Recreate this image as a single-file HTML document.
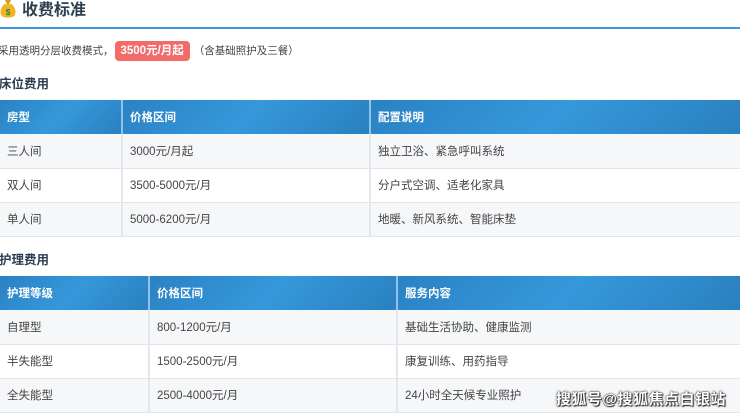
<!DOCTYPE html>
<html><head><meta charset="utf-8"><style>
*{margin:0;padding:0;box-sizing:border-box}
body{width:740px;height:416px;overflow:hidden;background:#fff;font-family:"Liberation Sans","Noto Sans CJK SC",sans-serif;color:#333;position:relative}
.title{position:absolute;left:0;top:0;height:29px;width:740px;border-bottom:2px solid #3a96dd;font-size:16px;font-weight:bold;color:#2c3e50;line-height:18px}
.title svg{position:absolute;left:0;top:0}
.title span{position:absolute;left:22px;top:2px}
.intro{position:absolute;left:-2px;top:41px;font-size:10.5px;color:#444;line-height:19px;white-space:nowrap}
.badge{display:inline-block;background:#f26b6b;color:#fff;font-weight:bold;font-size:11.5px;border-radius:4px;padding:0 6px;line-height:20px;margin:0 4px 0 1px}
.h{position:absolute;left:-1px;font-size:12.5px;font-weight:bold;color:#2c3e50}
table{position:absolute;left:0;width:740px;border-collapse:collapse;font-size:11.5px}
th{background:linear-gradient(135deg,#2a82c4,#3598da 50%,#2a80c0);color:#fff;text-align:left;font-weight:bold;height:34px;padding-left:7px;border-right:2px solid #8fc3ea}
th:last-child{border-right:none}
td{height:34px;padding-left:7px;border-right:2px solid #e4e8ec;border-bottom:1px solid #e2e6ea;color:#444}
td:last-child{border-right:none}
tr.g td{background:#f6f7f9}
.wm{position:absolute;right:14px;bottom:7px;font-size:15px;font-weight:bold;color:#fff;text-shadow:0 0 2px #333,0 0 1px #000,1px 1px 1px #222;letter-spacing:.5px}
</style></head><body>
<div class="title"><svg width="16" height="18" viewBox="0 0 16 18"><path d="M5 0h6l-2 4h-2z" fill="#d99a1c"/><path d="M4.5 4h7c3.5 3 4.5 7 3.8 10-.8 3-3.5 3.5-7.3 3.5s-6.5-.5-7.3-3.5c-.7-3 .3-7 3.8-10z" fill="#f0b429"/><text x="8" y="15" font-size="8.5" font-weight="bold" fill="#2a8a2a" text-anchor="middle" font-family="Liberation Sans">$</text></svg><span>收费标准</span></div>
<div class="intro">采用透明分层收费模式，<span class="badge">3500元/月起</span>（含基础照护及三餐）</div>
<div class="h" style="top:73px">床位费用</div>
<table style="top:100px">
<colgroup><col style="width:122px"><col style="width:248px"><col></colgroup>
<tr><th>房型</th><th>价格区间</th><th>配置说明</th></tr>
<tr class="g"><td>三人间</td><td>3000元/月起</td><td>独立卫浴、紧急呼叫系统</td></tr>
<tr><td>双人间</td><td>3500-5000元/月</td><td>分户式空调、适老化家具</td></tr>
<tr class="g"><td>单人间</td><td>5000-6200元/月</td><td>地暖、新风系统、智能床垫</td></tr>
</table>
<div class="h" style="top:249px">护理费用</div>
<table style="top:276px">
<colgroup><col style="width:149px"><col style="width:248px"><col></colgroup>
<tr><th>护理等级</th><th>价格区间</th><th>服务内容</th></tr>
<tr class="g"><td>自理型</td><td>800-1200元/月</td><td>基础生活协助、健康监测</td></tr>
<tr><td>半失能型</td><td>1500-2500元/月</td><td>康复训练、用药指导</td></tr>
<tr class="g"><td>全失能型</td><td>2500-4000元/月</td><td>24小时全天候专业照护</td></tr>
</table>
<div class="wm">搜狐号@搜狐焦点白银站</div>
</body></html>
